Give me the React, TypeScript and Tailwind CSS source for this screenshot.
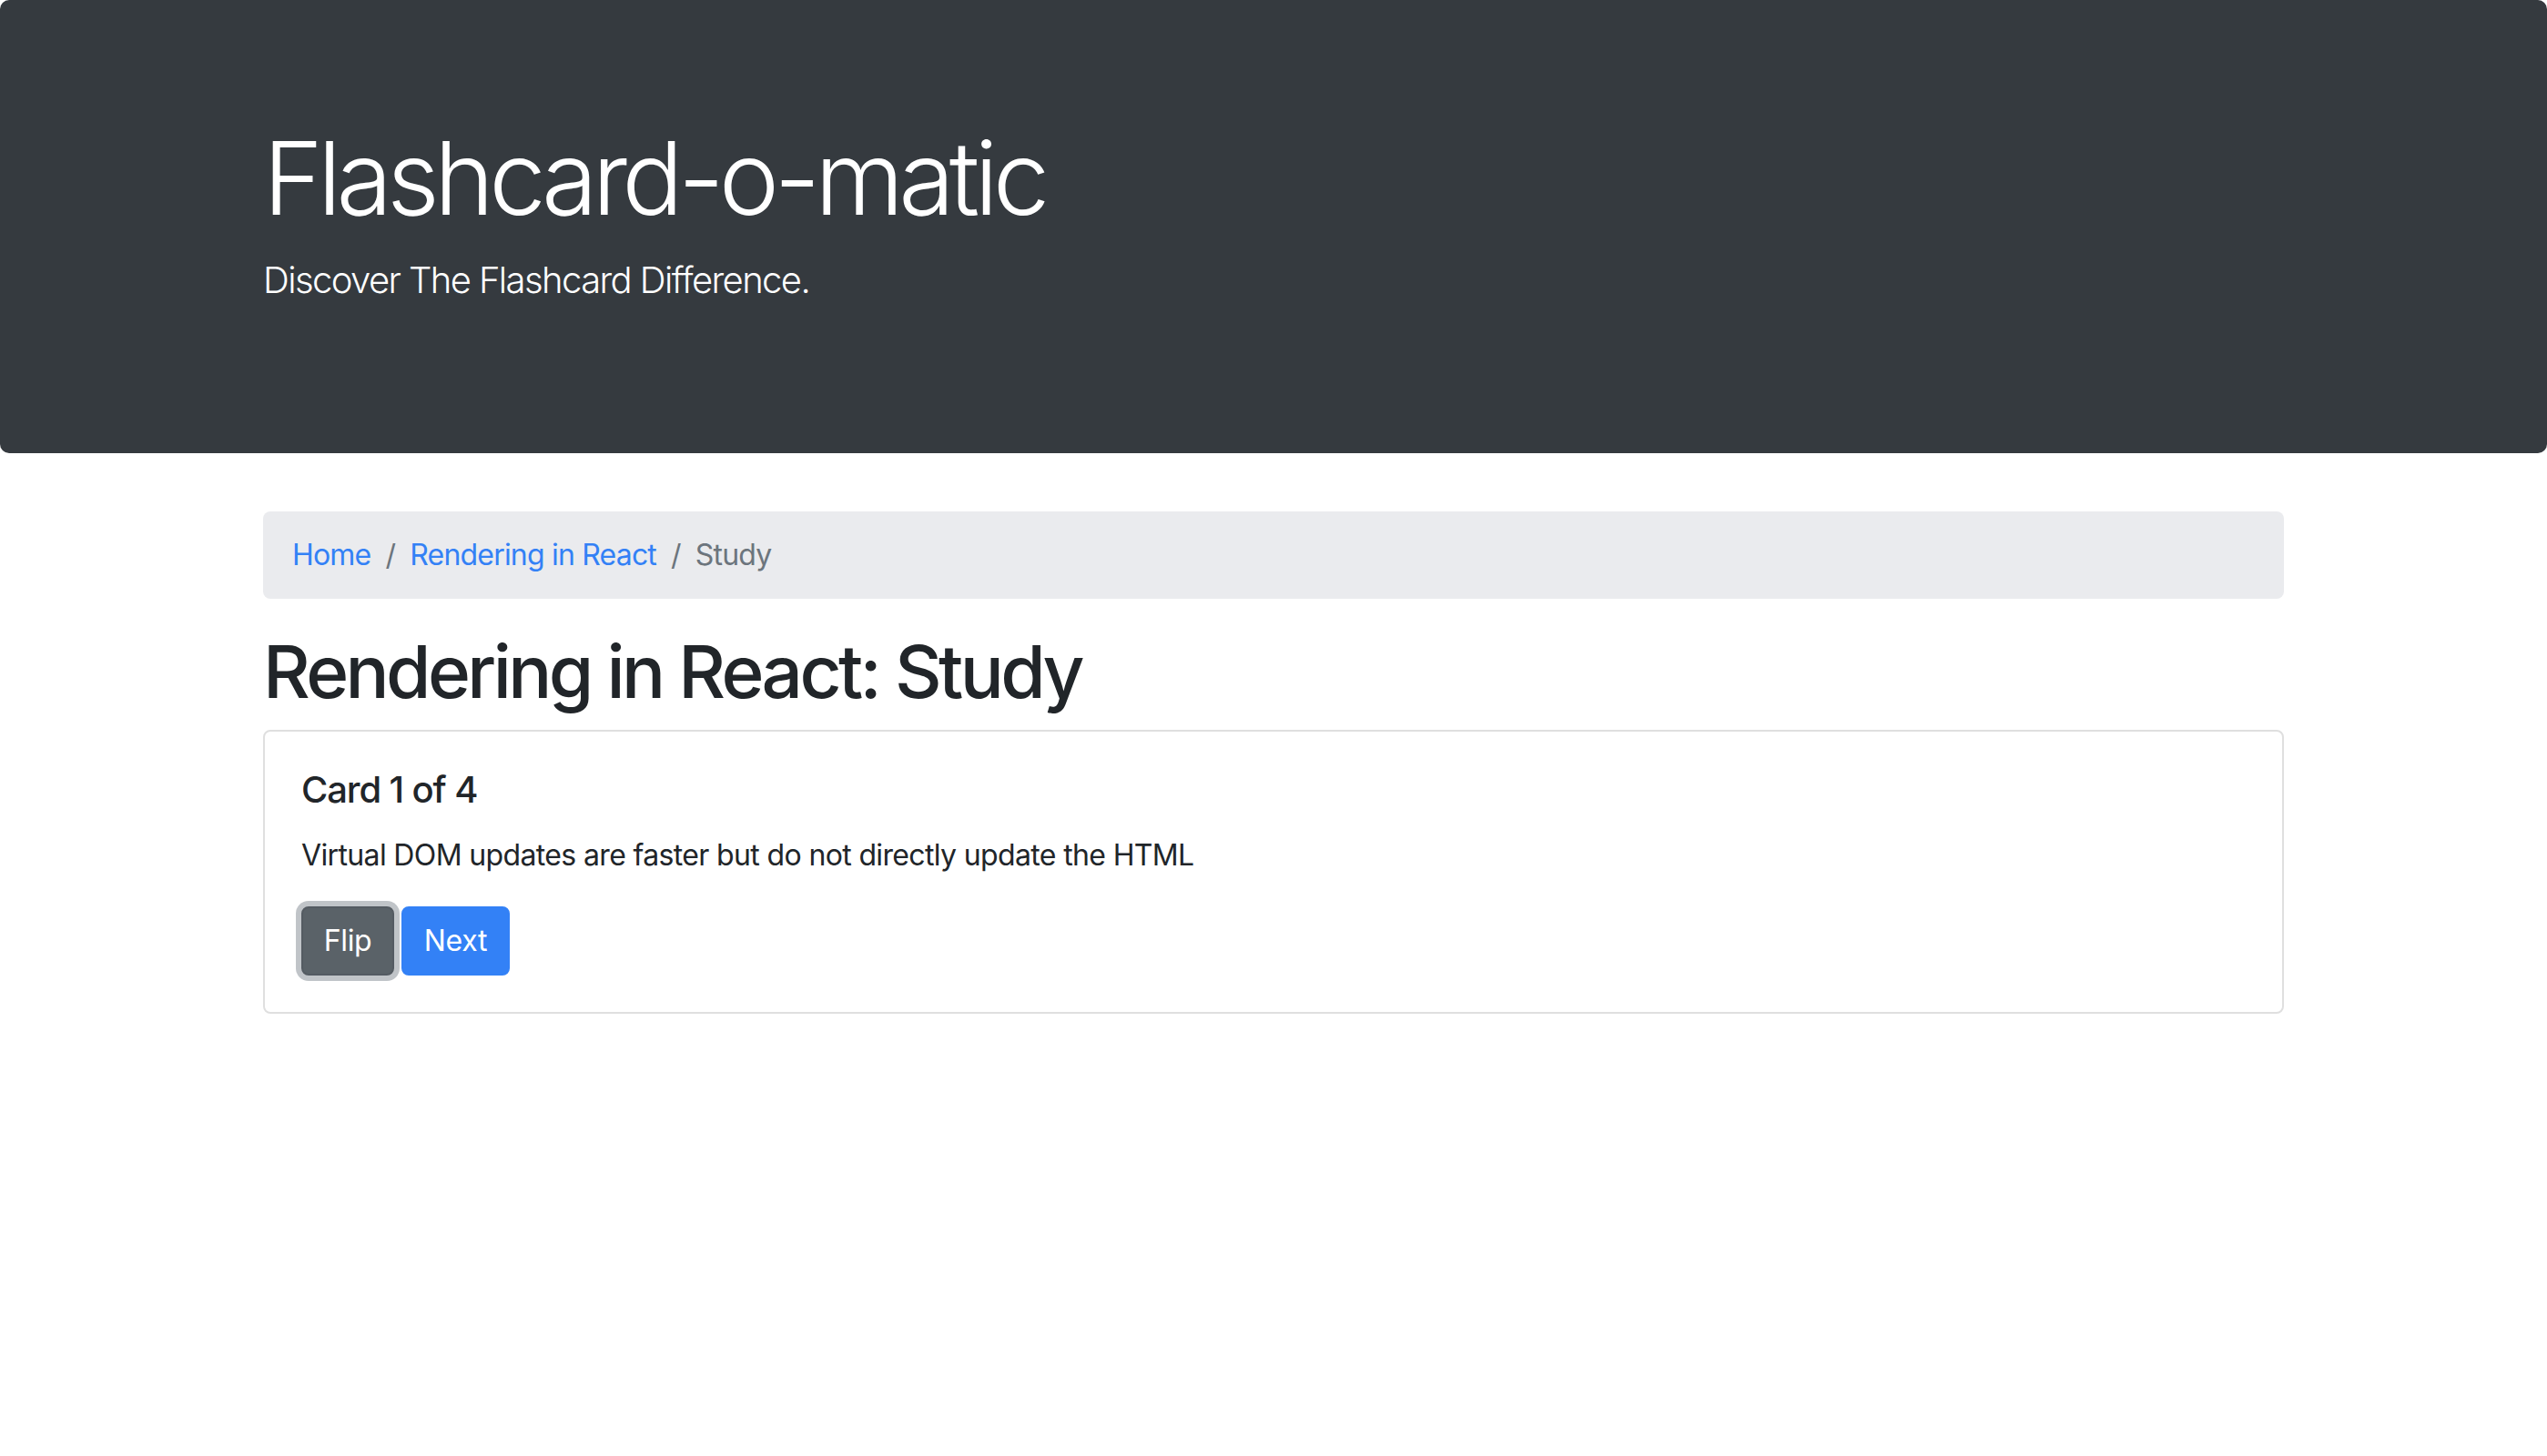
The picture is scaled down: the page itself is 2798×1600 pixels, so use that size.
import React from 'react';

const font = { fontFamily: 'Inter, "Noto Sans", "Liberation Sans", sans-serif' };

function Header() {
  return (
    <div className="mb-[64px] rounded-[10px] bg-[#353a3f] px-[64px] py-[128px] text-white">
      <div className="mx-auto max-w-[2280px] px-[30px]">
        <h1 className="mb-[16px] text-[112px] font-light leading-[1.2] tracking-[-0.052em]">
          Flashcard-o-matic
        </h1>
        <p className="mb-[32px] text-[40px] font-light leading-[1.5] tracking-[-0.04em]">
          Discover The Flashcard Difference.
        </p>
      </div>
    </div>
  );
}

function Breadcrumb() {
  return (
    <nav aria-label="breadcrumb">
      <ol className="mb-[32px] flex rounded-[8px] bg-[#eaebee] px-[32px] py-[24px] text-[32px] leading-[48px] tracking-[-0.025em]">
        <li>
          <a href="#" className="text-[#3381f6]">
            Home
          </a>
        </li>
        <li className="pl-[16px] text-[#6c757d]">
          <span className="pr-[16px]">/</span>
          <a href="#" className="text-[#3381f6]">
            Rendering in React
          </a>
        </li>
        <li className="pl-[16px] text-[#6c757d]">
          <span className="pr-[16px]">/</span>
          Study
        </li>
      </ol>
    </nav>
  );
}

function StudyCard() {
  return (
    <div className="rounded-[8px] border-2 border-[#dfdfdf] bg-white">
      <div className="p-[40px]">
        <h5 className="mb-[24px] text-[40px] font-medium leading-[1.2] tracking-[-0.028em]">
          Card 1 of 4
        </h5>
        <p className="mb-[32px] text-[32px] leading-[48px] tracking-[-0.02em]">
          Virtual DOM updates are faster but do not directly update the HTML
        </p>
        <div className="flex gap-[8px] tracking-[-0.02em]">
          <button className="w-[102px] rounded-[8px] border-2 border-[#545b62] bg-[#5a6268] py-[12px] text-[32px] leading-[48px] text-white shadow-[0_0_0_6px_rgba(130,138,145,0.5)]">
            Flip
          </button>
          <button className="w-[119px] rounded-[8px] border-2 border-[#3381f6] bg-[#3381f6] py-[12px] text-[32px] leading-[48px] text-white">
            Next
          </button>
        </div>
      </div>
    </div>
  );
}

export default function App() {
  return (
    <div className="min-h-screen bg-white text-[#212529]" style={font}>
      <Header />
      <div className="mx-auto max-w-[2280px] px-[30px]">
        <Breadcrumb />
        <h1 className="mb-[16px] text-[80px] font-medium leading-[1.2] tracking-[-0.045em]">
          Rendering in React: Study
        </h1>
        <StudyCard />
      </div>
    </div>
  );
}
